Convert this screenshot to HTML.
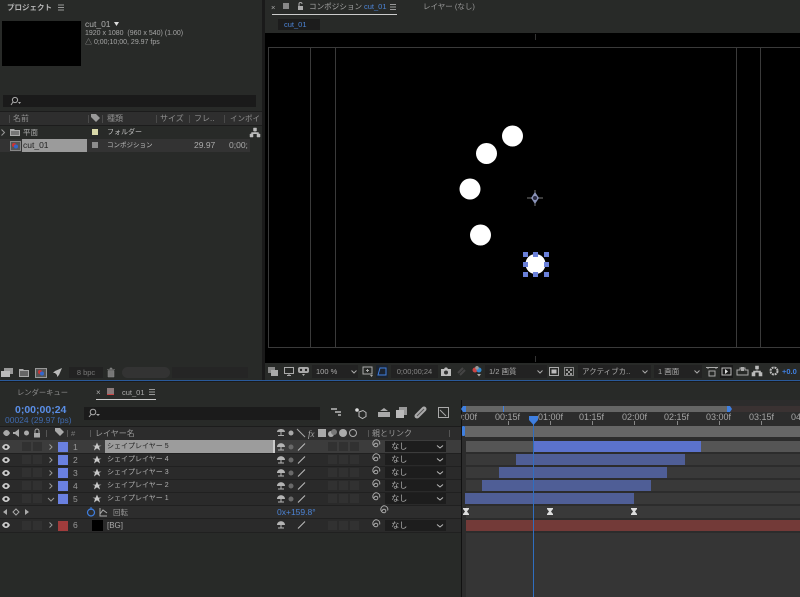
<!DOCTYPE html>
<html lang="ja"><head><meta charset="utf-8"><style>
html,body{margin:0;padding:0;background:#282a28;}
#p{position:relative;width:800px;height:597px;overflow:hidden;background:#282a28;font-family:"Liberation Sans","Noto Sans CJK JP",sans-serif;font-size:8px;color:#a8a8a8;filter:blur(.35px);}
#p div,#p span.a{position:absolute;white-space:nowrap;}
.t{line-height:11px;height:11px;}
.sq{width:9px;height:9px;background:#313131;}
.sw{width:10px;height:10px;background:#6a80e0;left:58px;}
.nm{left:107px;color:#b0b0b0;font-size:7px;}
.bar{background:#4f5e96;height:11px;}
.bg{left:466px;width:334px;height:11px;background:#393939;}
.dd{left:385px;width:61px;height:11px;background:#1d1d1d;color:#b5b5b5;line-height:11px;text-indent:4px;font-size:8px;}
.rl{top:411px;font-size:9px;color:#a5a5a5;line-height:12px;}
.tk{top:421px;width:1px;height:4px;background:#888;}
.hd{top:113px;color:#8e8e8e;font-size:8px;}
svg{position:absolute;overflow:visible;}
</style></head><body><div id="p">

<!-- project panel -->
<div class="t" style="left:7px;top:2px;font-size:7.5px;color:#b5b5b5;font-weight:bold;">プロジェクト</div>
<svg style="left:58px;top:4px" width="7" height="7"><path d="M0 1H6M0 3.500H6M0 6H6" stroke="#999" stroke-width="1"/></svg>
<div style="left:262px;top:0;width:3px;height:380px;background:#1a1a1a;"></div>
<div style="left:2px;top:21px;width:79px;height:45px;background:#000;"></div>
<div class="t" style="left:85px;top:19px;font-size:8.500px;color:#b0b0b0;">cut_01</div>
<svg style="left:114px;top:22px" width="5" height="4"><path d="M0 0H5L2.500 4Z" fill="#ddd"/></svg>
<div class="t" style="left:85px;top:28px;font-size:7px;color:#a5a5a5;">1920 x 1080&nbsp; (960 x 540) (1.00)</div>
<div class="t" style="left:85px;top:37px;font-size:7px;color:#a5a5a5;">&#9651; 0;00;10;00, 29.97 fps</div>
<div style="left:3px;top:95px;width:253px;height:12px;background:#1a1a1a;"></div>
<svg style="left:10px;top:96px" width="12" height="10"><circle cx="5" cy="4" r="2.600" fill="none" stroke="#aaa"/><path d="M3 6L1 9" stroke="#aaa"/><path d="M8 6H11L9.500 8Z" fill="#aaa"/></svg>
<div style="left:0;top:112px;width:262px;height:13px;background:#2e2e2e;"></div>
<div style="left:0;top:111px;width:262px;height:1px;background:#1c1c1c;"></div>
<div style="left:0;top:125px;width:262px;height:1px;background:#1c1c1c;"></div>
<div class="t hd" style="left:13px;">名前</div>
<svg style="left:91px;top:114px" width="10" height="9"><path d="M0 0H5L9 4L5 8L0 3Z" fill="#999"/></svg>
<div class="t hd" style="left:107px;">種類</div>
<div class="t hd" style="left:160px;">サイズ</div>
<div class="t hd" style="left:194px;">フレ..</div>
<div class="t hd" style="left:230px;font-size:7.500px;">インポイ</div>
<div style="left:9px;top:115px;width:1px;height:8px;background:#4a4a4a"></div>
<div style="left:88px;top:115px;width:1px;height:8px;background:#4a4a4a"></div>
<div style="left:102px;top:115px;width:1px;height:8px;background:#4a4a4a"></div>
<div style="left:156px;top:115px;width:1px;height:8px;background:#4a4a4a"></div>
<div style="left:189px;top:115px;width:1px;height:8px;background:#4a4a4a"></div>
<div style="left:224px;top:115px;width:1px;height:8px;background:#4a4a4a"></div>

<svg style="left:1px;top:129px" width="4" height="7"><path d="M0.500 0.500L3.500 3.500L0.500 6.500" fill="none" stroke="#999"/></svg>
<svg style="left:10px;top:128px" width="11" height="9"><path d="M0 1H4L5 2H10V8H0Z" fill="#aaa"/><path d="M1 3H9V7H1Z" fill="#777"/></svg>
<div class="t" style="left:23px;top:127px;font-size:7.500px;color:#aaa;">平面</div>
<div style="left:92px;top:129px;width:6px;height:6px;background:#d8d8a8;"></div>
<div class="t" style="left:107px;top:127px;font-size:7px;color:#c0c0c0;">フォルダー</div>
<svg style="left:250px;top:128px" width="10" height="9"><path d="M3.500 0H6.500V3H3.500ZM0 6H3V9H0ZM7 6H10V9H7ZM5 3V5M1.500 6V4.500H8.500V6" fill="#bbb" stroke="#bbb" stroke-width=".5"/></svg>

<div style="left:0;top:139px;width:250px;height:13px;background:#333;"></div>
<svg style="left:10px;top:141px" width="11" height="10"><rect width="11" height="10" fill="#888"/><rect x="1" y="1" width="9" height="8" fill="#555"/><circle cx="4" cy="4" r="2" fill="#c33"/><circle cx="6" cy="5.500" r="2" fill="#36c"/></svg>
<div class="t" style="left:22px;top:139px;width:65px;height:13px;line-height:13px;background:#9b9b9b;color:#222;font-size:8.500px;text-indent:1px;">cut_01</div>
<div style="left:92px;top:142px;width:6px;height:6px;background:#8d8d8d;"></div>
<div class="t" style="left:107px;top:140px;font-size:6.500px;color:#c0c0c0;">コンポジション</div>
<div class="t" style="left:194px;top:140px;font-size:8.500px;color:#aaa;">29.97</div>
<div class="t" style="left:229px;top:140px;font-size:8.500px;color:#aaa;">0;00;</div>

<!-- bottom project toolbar -->
<svg style="left:1px;top:368px" width="12" height="9"><rect x="3" y="0" width="9" height="6" fill="#999"/><rect x="0" y="3" width="9" height="6" fill="#bbb"/></svg>
<svg style="left:19px;top:369px" width="10" height="8"><path d="M0 0H4L5 1H10V8H0Z" fill="#aaa"/><rect x="1" y="2" width="8" height="5" fill="#666"/></svg>
<svg style="left:35px;top:368px" width="12" height="10"><rect width="12" height="10" fill="#999"/><rect x="1" y="1" width="10" height="8" fill="#555"/><circle cx="5" cy="4" r="2" fill="#c33"/><circle cx="7" cy="5.500" r="2" fill="#36c"/></svg>
<svg style="left:53px;top:368px" width="9" height="9"><path d="M9 0L2 3L0 5L2 5L4 7L4 9L6 7L9 0ZM0 9L2 7" fill="#bbb"/></svg>
<div class="t" style="left:69px;top:367px;width:34px;height:11px;background:#222;color:#777;font-size:7.500px;text-align:center;">8 bpc</div>
<svg style="left:107px;top:368px" width="8" height="9"><path d="M0 1.500H8M3 1.500V0H5V1.500M1 2.500H7V9H1Z" fill="#777" stroke="#888" stroke-width=".5"/></svg>
<div style="left:122px;top:367px;width:48px;height:11px;border-radius:6px;background:#333;"></div>
<div style="left:172px;top:367px;width:76px;height:11px;background:#252525;"></div>

<!-- comp panel tabs -->
<div class="t" style="left:271px;top:2px;font-size:7.500px;color:#aaa;">×</div>
<div style="left:283px;top:3px;width:6px;height:6px;background:#888;"></div>
<svg style="left:297px;top:2px" width="7" height="8"><path d="M1 4H6V8H1Z" fill="#aaa"/><path d="M2 4V2A1.500 1.500 0 0 1 5 2" fill="none" stroke="#aaa"/></svg>
<div class="t" style="left:309px;top:1px;font-size:7.600px;color:#a5a5a5;">コンポジション</div>
<div class="t" style="left:364px;top:1px;font-size:7.500px;color:#4c84d6;">cut_01</div>
<svg style="left:390px;top:4px" width="6" height="6"><path d="M0 .5H6M0 3H6M0 5.500H6" stroke="#999"/></svg>
<div style="left:272px;top:14px;width:125px;height:1px;background:#ccc;"></div>
<div class="t" style="left:423px;top:1px;font-size:7.500px;color:#9a9a9a;">レイヤー (なし)</div>
<div class="t" style="left:278px;top:19px;width:42px;height:11px;background:#1c1c1c;color:#4c84d6;font-size:7.500px;text-indent:6px;">cut_01</div>

<!-- viewer -->
<div style="left:265px;top:33px;width:535px;height:330px;background:#000;"></div>
<div style="left:268px;top:47px;width:532px;height:301px;border:1px solid #3a3a3a;box-sizing:border-box;border-right:none;"></div>
<div style="left:310px;top:47px;width:1px;height:301px;background:#3a3a3a;"></div>
<div style="left:335px;top:47px;width:1px;height:301px;background:#3a3a3a;"></div>
<div style="left:736px;top:47px;width:1px;height:301px;background:#3a3a3a;"></div>
<div style="left:760px;top:47px;width:1px;height:301px;background:#3a3a3a;"></div>
<div style="left:535px;top:34px;width:1px;height:6px;background:#333;"></div>
<div style="left:535px;top:356px;width:1px;height:6px;background:#333;"></div>
<svg style="left:0;top:0" width="800" height="597">
<circle cx="512.500" cy="136" r="10.500" fill="#fff"/>
<circle cx="486.500" cy="153.500" r="10.500" fill="#fff"/>
<circle cx="470" cy="189" r="10.500" fill="#fff"/>
<circle cx="480.500" cy="235" r="10.500" fill="#fff"/>
<circle cx="535.500" cy="264" r="10" fill="#fff"/>
<g fill="#6a80d8"><rect x="523" y="252" width="5" height="5"/><rect x="533" y="252" width="5" height="5"/><rect x="544" y="252" width="5" height="5"/><rect x="523" y="262" width="5" height="5"/><rect x="544" y="262" width="5" height="5"/><rect x="523" y="272" width="5" height="5"/><rect x="533" y="272" width="5" height="5"/><rect x="544" y="272" width="5" height="5"/></g>
<path d="M535 190V206M527 198H543" stroke="#777" stroke-width="1"/>
<path d="M535 192L539 198L535 204L531 198Z" fill="#8a93b8"/>
<circle cx="535" cy="198" r="2" fill="#2a2a40"/>
</svg>

<!-- viewer toolbar -->
<div style="left:265px;top:363px;width:535px;height:17px;background:#282a28;"></div>
<svg style="left:268px;top:367px" width="10" height="9"><rect x="0" y="0" width="7" height="6" fill="#888"/><rect x="3" y="3" width="7" height="6" fill="#aaa"/></svg>
<svg style="left:284px;top:367px" width="10" height="9"><rect x=".5" y=".5" width="9" height="6" fill="none" stroke="#aaa"/><path d="M3 8.500H7M5 7V8" stroke="#aaa"/></svg>
<svg style="left:298px;top:367px" width="12" height="9"><rect x="0" y="0" width="11" height="6" rx="2" fill="#aaa"/><circle cx="3" cy="3" r="1.200" fill="#222"/><circle cx="8" cy="3" r="1.200" fill="#222"/><path d="M4 7H7L5.500 9Z" fill="#aaa"/></svg>
<div class="t" style="left:312px;top:365px;width:46px;height:13px;line-height:13px;background:#222;font-size:7.500px;color:#aaa;text-indent:4px;">100 %</div>
<svg style="left:351px;top:370px" width="6" height="4"><path d="M.5 .5L3 3L5.500 .5" fill="none" stroke="#aaa"/></svg>
<svg style="left:362px;top:366px" width="12" height="11"><rect x="1" y="1" width="9" height="7" fill="none" stroke="#aaa"/><path d="M5.500 3V6M4 4.500H7" stroke="#aaa"/><path d="M8 9H11L9.500 11Z" fill="#aaa"/></svg>
<svg style="left:376px;top:365px" width="12" height="13"><rect width="12" height="13" fill="#1c2430"/><path d="M2 10L4 3H10V10Z" fill="none" stroke="#3f7fe0"/></svg>
<div class="t" style="left:391px;top:365px;width:47px;height:13px;line-height:13px;background:#222;font-size:7.500px;color:#888;text-align:center;">0;00;00;24</div>
<svg style="left:441px;top:367px" width="10" height="9"><path d="M0 2H3L4 .5H6L7 2H10V9H0Z" fill="#bbb"/><circle cx="5" cy="5.500" r="2" fill="#333"/></svg>
<svg style="left:457px;top:367px" width="9" height="9"><path d="M1 6L6 1M3 8L8 3" stroke="#444" stroke-width="2"/></svg>
<svg style="left:472px;top:366px" width="10" height="11"><circle cx="3" cy="4" r="2.500" fill="#c44"/><circle cx="7" cy="4" r="2.500" fill="#38c"/><circle cx="5" cy="1.800" r="1.800" fill="#999"/><path d="M5 8H9L7 10.500Z" fill="#aaa"/></svg>
<div class="t" style="left:485px;top:365px;width:62px;height:13px;line-height:13px;background:#222;font-size:7.500px;color:#aaa;text-indent:4px;">1/2 画質</div>
<svg style="left:537px;top:370px" width="6" height="4"><path d="M.5 .5L3 3L5.500 .5" fill="none" stroke="#aaa"/></svg>
<svg style="left:549px;top:367px" width="10" height="9"><rect x=".5" y=".5" width="9" height="8" fill="none" stroke="#aaa"/><rect x="2.500" y="2.500" width="5" height="4" fill="#bbb"/></svg>
<svg style="left:564px;top:367px" width="10" height="9"><rect x=".5" y=".5" width="9" height="8" fill="none" stroke="#888"/><path d="M2 2H4V4H2ZM6 2H8V4H6ZM4 4H6V6H4ZM2 6H4V8H2ZM6 6H8V8H6Z" fill="#999"/></svg>
<div class="t" style="left:578px;top:365px;width:73px;height:13px;line-height:13px;background:#222;font-size:7.500px;color:#aaa;text-indent:4px;">アクティブカ..</div>
<svg style="left:642px;top:370px" width="6" height="4"><path d="M.5 .5L3 3L5.500 .5" fill="none" stroke="#aaa"/></svg>
<div class="t" style="left:654px;top:365px;width:48px;height:13px;line-height:13px;background:#222;font-size:7.500px;color:#aaa;text-indent:4px;">1 画面</div>
<svg style="left:694px;top:370px" width="6" height="4"><path d="M.5 .5L3 3L5.500 .5" fill="none" stroke="#aaa"/></svg>
<svg style="left:706px;top:366px" width="12" height="11"><path d="M0 1.500H12M2 1.500V3M10 1.500V3" stroke="#aaa"/><rect x="3" y="5" width="6" height="5" fill="none" stroke="#aaa"/></svg>
<svg style="left:720px;top:365px" width="13" height="13"><rect width="13" height="13" fill="#1a1a1a"/><rect x="2" y="3" width="9" height="7" fill="none" stroke="#bbb"/><path d="M5 4L8 6.500L5 9Z" fill="#ddd"/></svg>
<svg style="left:737px;top:366px" width="11" height="10"><path d="M0 4H3V2H8V4H11V9H0Z" fill="none" stroke="#aaa"/><rect x="4" y="1" width="3" height="4" fill="#aaa"/></svg>
<svg style="left:752px;top:366px" width="10" height="10"><path d="M3.500 0H6.500V3H3.500ZM0 6.500H3V10H0ZM7 6.500H10V10H7ZM5 3V5M1.500 6.500V5H8.500V6.500" fill="#bbb" stroke="#bbb" stroke-width=".6"/></svg>
<svg style="left:769px;top:366px" width="10" height="10"><circle cx="5" cy="5" r="3.500" fill="none" stroke="#bbb" stroke-width="2" stroke-dasharray="2 .8"/></svg>
<div class="t" style="left:782px;top:366px;font-size:7.500px;color:#3f7fe0;font-weight:bold;">+0.0</div>

<!-- timeline area -->
<div style="left:0;top:380px;width:800px;height:1px;background:#2a5a9a;"></div>
<div style="left:0;top:381px;width:800px;height:1px;background:#1a1a1a;"></div>
<div class="t" style="left:17px;top:387px;font-size:7.300px;color:#8e8e8e;">レンダーキュー</div>
<div class="t" style="left:96px;top:387px;font-size:8px;color:#aaa;">×</div>
<div style="left:107px;top:388px;width:7px;height:7px;background:#8a7a7a;border-bottom:1px solid #c44;box-sizing:border-box;"></div>
<div class="t" style="left:122px;top:387px;font-size:7.500px;color:#aaa;">cut_01</div>
<svg style="left:149px;top:389px" width="6" height="6"><path d="M0 .5H6M0 3H6M0 5.500H6" stroke="#999"/></svg>
<div style="left:96px;top:399px;width:60px;height:1px;background:#ccc;"></div>

<div class="t" style="left:15px;top:404px;font-size:10.500px;font-weight:bold;color:#5a8fe8;height:13px;line-height:13px;">0;00;00;24</div>
<div class="t" style="left:5px;top:415px;font-size:8.500px;color:#3f69ad;">00024 (29.97 fps)</div>
<div style="left:84px;top:407px;width:236px;height:13px;background:#1b1b1b;"></div>
<svg style="left:88px;top:408px" width="13" height="10"><circle cx="5" cy="4" r="2.800" fill="none" stroke="#aaa"/><path d="M3 6.500L1 9" stroke="#aaa"/><path d="M8 6H12L10 8Z" fill="#aaa"/></svg>

<!-- timeline icons -->
<svg style="left:331px;top:408px" width="12" height="10"><path d="M0 1H6M4 4H10M7 7H10" stroke="#bbb" stroke-width="1.500"/></svg>
<svg style="left:354px;top:407px" width="12" height="12"><path d="M5 5L9 3.500L12 5.500V9.500L8.500 11.500L5 9.500Z" fill="none" stroke="#bbb"/><circle cx="3" cy="3" r="1.800" fill="#ddd"/></svg>
<svg style="left:378px;top:408px" width="12" height="10"><path d="M6 0L10 3H2ZM0 4H12V9H0Z" fill="#aaa"/></svg>
<svg style="left:396px;top:407px" width="11" height="11"><rect x="3" y="0" width="8" height="8" fill="#999"/><rect x="0" y="3" width="8" height="8" fill="#bbb"/></svg>
<svg style="left:415px;top:407px" width="11" height="11"><path d="M2 9L9 2" stroke="#aaa" stroke-width="5" stroke-linecap="round"/><path d="M2 9L9 2" stroke="#555" stroke-width="1"/></svg>
<svg style="left:438px;top:407px" width="11" height="11"><rect x=".5" y=".5" width="10" height="10" fill="none" stroke="#aaa"/><path d="M2 3L8 9" stroke="#aaa"/></svg>

<!-- column header -->
<div style="left:0;top:427px;width:461px;height:13px;background:#2c2c2c;"></div>
<div style="left:0;top:426px;width:461px;height:1px;background:#1c1c1c;"></div>
<svg style="left:2px;top:429px" width="40" height="9"><path d="M1 4C3 0 6 0 8 4C6 8 3 8 1 4Z" fill="#aaa"/><path d="M11 3H13L17 0V8L13 5H11Z" fill="#aaa"/><circle cx="24.500" cy="4" r="2.500" fill="#aaa"/><path d="M32 4H38V8.500H32Z" fill="#aaa"/><path d="M33 4V2A2 2 0 0 1 37 2V4" fill="none" stroke="#aaa"/></svg>
<svg style="left:55px;top:428px" width="10" height="9"><path d="M0 0H5L9 4L5 8L0 3Z" fill="#aaa"/></svg>
<div class="t" style="left:71px;top:428px;font-size:7.500px;color:#777;">#</div>
<div class="t" style="left:95px;top:428px;font-size:8px;color:#999;">レイヤー名</div>
<div style="left:46px;top:430px;width:1px;height:7px;background:#555"></div>
<div style="left:67px;top:430px;width:1px;height:7px;background:#555"></div>
<div style="left:90px;top:430px;width:1px;height:7px;background:#555"></div>
<svg style="left:277px;top:429px" width="80" height="9"><g fill="#aaa"><path d="M0 3C0-1 8-1 8 3ZM3.500 3H4.500V7H3.500ZM1 6H7V7H1Z"/><circle cx="14" cy="4" r="2.500"/><path d="M20 0L28 8" stroke="#aaa" fill="none"/><text x="31" y="8" font-size="9" font-style="italic" font-family="Liberation Serif">fx</text><rect x="41" y="0" width="8" height="8"/><circle cx="54" cy="5" r="3"/><circle cx="57" cy="3" r="3" fill="#777"/><circle cx="66" cy="4" r="4"/><circle cx="76" cy="4" r="3.500" fill="none" stroke="#aaa"/></g></svg>
<div class="t" style="left:372px;top:428px;font-size:8px;color:#999;">親とリンク</div>
<div style="left:368px;top:430px;width:1px;height:7px;background:#555"></div>
<div style="left:449px;top:430px;width:1px;height:7px;background:#555"></div>

<!-- left side rows -->
<div style="left:0;top:440px;width:461px;height:92px;background:#2a2a2a;"></div>
<div style="left:0;top:440px;width:461px;height:13px;background:#3c3c3c;"></div>
<div style="left:105px;top:440px;width:168px;height:13px;background:#9c9c9c;"></div>
<div style="left:273px;top:440px;width:2px;height:13px;background:#ccc;"></div>
<div style="left:0;top:453px;width:461px;height:1px;background:#202020"></div>
<div style="left:0;top:466px;width:461px;height:1px;background:#202020"></div>
<div style="left:0;top:479px;width:461px;height:1px;background:#202020"></div>
<div style="left:0;top:492px;width:461px;height:1px;background:#202020"></div>
<div style="left:0;top:505px;width:461px;height:1px;background:#202020"></div>
<div style="left:0;top:518px;width:461px;height:1px;background:#202020"></div>
<div style="left:0;top:532px;width:461px;height:1px;background:#202020"></div>
<div style="left:0;top:506px;width:461px;height:12px;background:#2d2d2d;"></div>

<svg style="left:0;top:0" width="461" height="597">
<defs>
<g id="e"><path d="M2 0C4-4 8-4 10 0C8 4 4 4 2 0Z" fill="#ccc"/><circle cx="6" cy="0" r="1.400" fill="#222"/></g>
<path id="s" d="M0-4.500L1.300-1.400L4.500-1.400L2-.3L3 3.500L0 1.300L-3 3.500L-2-.3L-4.500-1.400L-1.300-1.400Z" fill="#c8c8c8"/>
<path id="c" d="M-1.500-2.500L1 0L-1.500 2.500" fill="none" stroke="#999"/>
<g id="sh" fill="#b5b5b5"><path d="M0 0C0-5 8-5 8 0ZM3.500 0H4.500V3.500H3.500ZM1 2.500H7V3.500H1Z"/></g>
<g id="sw2"><circle cx="0" cy="0" r="2.500" fill="#6a6a6a"/></g>
<path id="sl" d="M0 3.500L7-3.500" stroke="#c0c0c0" fill="none"/>
<path id="sp" d="M-1.800 0A1.800 1.800 0 1 1 0 1.800A3.500 3.500 0 1 1 3.600 -.5" fill="none" stroke="#aaa"/>
</defs>
<use href="#e" x="0" y="447"/><use href="#e" x="0" y="460"/><use href="#e" x="0" y="473"/><use href="#e" x="0" y="486"/><use href="#e" x="0" y="499"/><use href="#e" x="0" y="525"/>
<use href="#c" x="51" y="447"/><use href="#c" x="51" y="460"/><use href="#c" x="51" y="473"/><use href="#c" x="51" y="486"/><use href="#c" x="51" y="525"/>
<path d="M48 498L51 501L54 498" fill="none" stroke="#999"/>
<use href="#s" x="97" y="447"/><use href="#s" x="97" y="460"/><use href="#s" x="97" y="473"/><use href="#s" x="97" y="486"/><use href="#s" x="97" y="499"/>
<use href="#sh" x="277" y="447"/><use href="#sh" x="277" y="460"/><use href="#sh" x="277" y="473"/><use href="#sh" x="277" y="486"/><use href="#sh" x="277" y="499"/><use href="#sh" x="277" y="525"/>
<use href="#sw2" x="291" y="447"/><use href="#sw2" x="291" y="460"/><use href="#sw2" x="291" y="473"/><use href="#sw2" x="291" y="486"/><use href="#sw2" x="291" y="499"/>
<use href="#sl" x="298" y="447"/><use href="#sl" x="298" y="460"/><use href="#sl" x="298" y="473"/><use href="#sl" x="298" y="486"/><use href="#sl" x="298" y="499"/><use href="#sl" x="298" y="525"/>
<use href="#sp" x="376" y="445"/><use href="#sp" x="376" y="459"/><use href="#sp" x="376" y="472"/><use href="#sp" x="376" y="485"/><use href="#sp" x="376" y="498"/><use href="#sp" x="384" y="511"/><use href="#sp" x="376" y="525"/>
<path d="M7 509L3 512L7 515ZM25 509L29 512L25 515Z" fill="#aaa"/><path d="M16 509L19 512L16 515L13 512Z" fill="none" stroke="#aaa"/>
<circle cx="91" cy="512.500" r="3.500" fill="none" stroke="#3f7fe0" stroke-width="1.200"/><path d="M91 507V510" stroke="#3f7fe0"/>
<path d="M100 508V516H107M100 514L103 510L107 513" fill="none" stroke="#aaa"/>
</svg>

<div class="sq" style="left:22px;top:442px"></div><div class="sq" style="left:33px;top:442px"></div>
<div class="sq" style="left:22px;top:455px"></div><div class="sq" style="left:33px;top:455px"></div>
<div class="sq" style="left:22px;top:468px"></div><div class="sq" style="left:33px;top:468px"></div>
<div class="sq" style="left:22px;top:481px"></div><div class="sq" style="left:33px;top:481px"></div>
<div class="sq" style="left:22px;top:494px"></div><div class="sq" style="left:33px;top:494px"></div>
<div class="sq" style="left:22px;top:521px"></div><div class="sq" style="left:33px;top:521px"></div>

<div class="sw" style="top:442px"></div><div class="sw" style="top:455px"></div><div class="sw" style="top:468px"></div><div class="sw" style="top:481px"></div><div class="sw" style="top:494px"></div>
<div class="sw" style="top:521px;background:#a03c3c"></div>
<div class="t" style="left:73px;top:442px;color:#999;font-size:8.500px;">1</div>
<div class="t" style="left:73px;top:455px;color:#999;font-size:8.500px;">2</div>
<div class="t" style="left:73px;top:468px;color:#999;font-size:8.500px;">3</div>
<div class="t" style="left:73px;top:481px;color:#999;font-size:8.500px;">4</div>
<div class="t" style="left:73px;top:494px;color:#999;font-size:8.500px;">5</div>
<div class="t" style="left:73px;top:520px;color:#999;font-size:8.500px;">6</div>
<div style="left:92px;top:520px;width:11px;height:11px;background:#000;"></div>
<div class="t nm" style="top:441px;color:#222;">シェイプレイヤー 5</div>
<div class="t nm" style="top:454px;">シェイプレイヤー 4</div>
<div class="t nm" style="top:467px;">シェイプレイヤー 3</div>
<div class="t nm" style="top:480px;">シェイプレイヤー 2</div>
<div class="t nm" style="top:493px;">シェイプレイヤー 1</div>
<div class="t nm" style="top:507px;left:113px;color:#999;font-size:7.500px;">回転</div>
<div class="t nm" style="top:520px;color:#aaa;font-size:8px;">[BG]</div>
<div class="t" style="left:277px;top:507px;color:#4c84d6;font-size:8.500px;">0x+159.8°</div>

<div class="sq" style="left:328px;top:442px"></div><div class="sq" style="left:339px;top:442px"></div><div class="sq" style="left:350px;top:442px"></div>
<div class="sq" style="left:328px;top:455px"></div><div class="sq" style="left:339px;top:455px"></div><div class="sq" style="left:350px;top:455px"></div>
<div class="sq" style="left:328px;top:468px"></div><div class="sq" style="left:339px;top:468px"></div><div class="sq" style="left:350px;top:468px"></div>
<div class="sq" style="left:328px;top:481px"></div><div class="sq" style="left:339px;top:481px"></div><div class="sq" style="left:350px;top:481px"></div>
<div class="sq" style="left:328px;top:494px"></div><div class="sq" style="left:339px;top:494px"></div><div class="sq" style="left:350px;top:494px"></div>
<div class="sq" style="left:328px;top:521px"></div><div class="sq" style="left:339px;top:521px"></div><div class="sq" style="left:350px;top:521px"></div>

<div class="dd" style="top:441px">&nbsp;なし</div>
<div class="dd" style="top:454px">&nbsp;なし</div>
<div class="dd" style="top:467px">&nbsp;なし</div>
<div class="dd" style="top:480px">&nbsp;なし</div>
<div class="dd" style="top:493px">&nbsp;なし</div>
<div class="dd" style="top:520px">&nbsp;なし</div>
<svg style="left:0;top:0" width="461" height="597"><g fill="none" stroke="#bbb"><path d="M437 445.500L440 448L443 445.500M437 458.500L440 461L443 458.500M437 471.500L440 474L443 471.500M437 484.500L440 487L443 484.500M437 497.500L440 500L443 497.500M437 524.500L440 527L443 524.500"/></g></svg>

<!-- timeline right -->
<div style="left:461px;top:400px;width:1px;height:197px;background:#111;"></div>
<div style="left:462px;top:400px;width:338px;height:197px;background:#2c2c2c;"></div>
<div style="left:465px;top:406px;width:264px;height:6px;background:#666;"></div>
<div style="left:729px;top:406px;width:71px;height:6px;background:#3a3232;"></div>
<svg style="left:461px;top:406px" width="6" height="6"><path d="M5 0V6H2L0 3L2 0Z" fill="#3f7fe0"/></svg>
<svg style="left:727px;top:406px" width="5" height="6"><path d="M0 0H3L5 3L3 6H0Z" fill="#3f7fe0"/></svg>
<div style="left:503px;top:406px;width:1px;height:6px;background:#3f7fe0;"></div>
<div class="rl" style="left:461px;width:30px;overflow:hidden;"><span style="margin-left:-4px">0:00f</span></div>
<div class="rl" style="left:495px;">00:15f</div>
<div class="rl" style="left:538px;">01:00f</div>
<div class="rl" style="left:579px;">01:15f</div>
<div class="rl" style="left:622px;">02:00f</div>
<div class="rl" style="left:664px;">02:15f</div>
<div class="rl" style="left:706px;">03:00f</div>
<div class="rl" style="left:749px;">03:15f</div>
<div class="rl" style="left:791px;">04</div>
<div class="tk" style="left:508px"></div><div class="tk" style="left:550px"></div><div class="tk" style="left:592px"></div><div class="tk" style="left:634px"></div><div class="tk" style="left:677px"></div><div class="tk" style="left:719px"></div><div class="tk" style="left:761px"></div>

<div style="left:465px;top:426px;width:335px;height:11px;background:#666;"></div>
<div style="left:462px;top:426px;width:3px;height:10px;background:#3f7fe0;border-radius:1px;"></div>
<div class="bg" style="top:441px;background:#555;"></div>
<div class="bg" style="top:454px"></div><div class="bg" style="top:467px"></div><div class="bg" style="top:480px"></div><div class="bg" style="top:493px"></div>
<div class="bg" style="top:506px;height:12px"></div>
<div class="bg" style="top:533px;height:64px;background:#353535"></div>
<div class="bg" style="top:520px;background:#733a38"></div>

<div class="bar" style="left:533px;top:441px;width:168px;background:#5b72cc;"></div>
<div class="bar" style="left:516px;top:454px;width:169px;"></div>
<div class="bar" style="left:499px;top:467px;width:168px;"></div>
<div class="bar" style="left:482px;top:480px;width:169px;"></div>
<div class="bar" style="left:465px;top:493px;width:169px;"></div>
<svg style="left:462px;top:507px" width="180" height="9"><g fill="#ddd"><path d="M1 1H7V2L5 4.500L7 7V8H1V7L3 4.500L1 2Z"/><path d="M85 1H91V2L89 4.500L91 7V8H85V7L87 4.500L85 2Z"/><path d="M169 1H175V2L173 4.500L175 7V8H169V7L171 4.500L169 2Z"/></g></svg>

<div style="left:533px;top:420px;width:1px;height:177px;background:#2f6ec0;"></div>
<svg style="left:529px;top:416px" width="9" height="9"><path d="M0 0H9V4L4.500 9L0 4Z" fill="#3f7fe0"/></svg>
</div></body></html>
